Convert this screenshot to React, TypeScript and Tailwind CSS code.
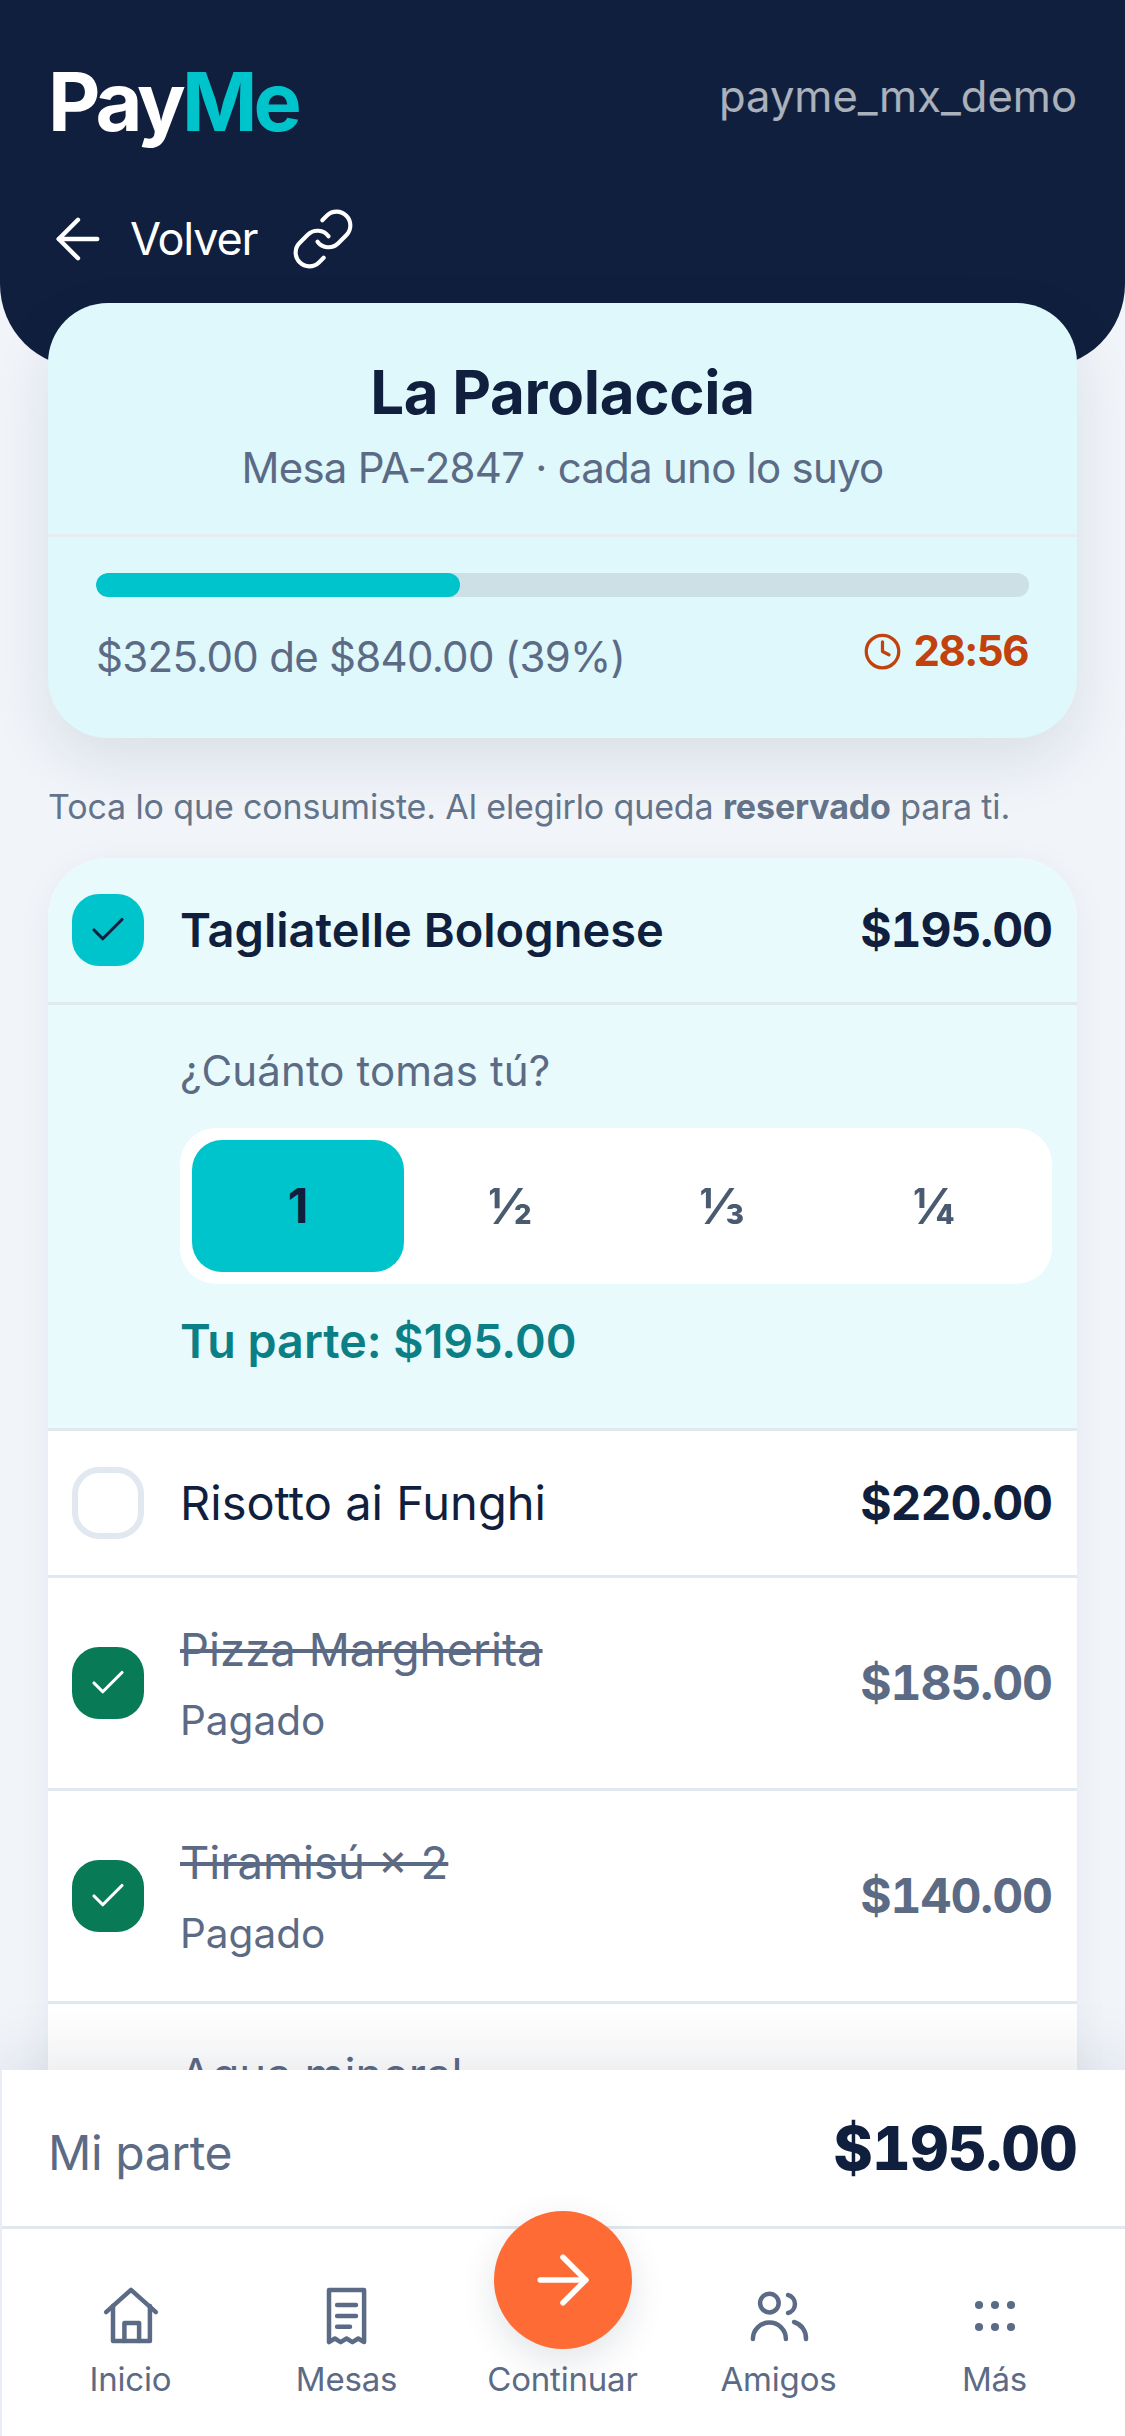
import React from "react";
import { ArrowLeft, ArrowRight, Link, Clock, Check } from "lucide-react";

function CheckBox({ state }: { state: "on" | "off" | "paid" }) {
  if (state === "off") return <div className="w-[72px] h-[72px] shrink-0 rounded-[27px] border-[6px] border-[#e2e8f0] bg-white" />;
  return (
    <div className={`w-[72px] h-[72px] shrink-0 rounded-[27px] flex items-center justify-center ${state === "on" ? "bg-[#00c4cc] text-[#0f1f3d]" : "bg-[#087a56] text-white"}`}>
      <Check size={42} strokeWidth={1.8} />
    </div>
  );
}

function PaidRow({ name, price }: { name: string; price: string }) {
  return (
    <div className="h-[213px] shrink-0 bg-white border-b-[3px] border-[#e2e8f0] pl-[24px] pr-[25px] flex items-center gap-[36px]">
      <CheckBox state="paid" />
      <div className="flex-1 flex flex-col gap-[13px]">
        <div className="text-[45.5px] leading-[63px] text-[#5c6b85] line-through">{name}</div>
        <div className="text-[40.5px] leading-[54px] text-[#5c6b85]">Pagado</div>
      </div>
      <div className="text-[48px] font-bold tabular-nums tracking-[-1.1px] text-[#5c6b85]">{price}</div>
    </div>
  );
}

function NavItem({ label, children }: { label: string; children: React.ReactNode }) {
  return (
    <div className="w-[216px] flex flex-col items-center pt-[51px]">
      <svg width="72" height="72" viewBox="0 0 24 24" fill="none" stroke="#5c6b85" strokeWidth="1.5" strokeLinecap="round" strokeLinejoin="round">
        {children}
      </svg>
      <div className="mt-[3px] text-[33px] leading-[48px] tracking-[-0.2px] text-[#5c6b85]">{label}</div>
    </div>
  );
}

export default function App() {
  return (
    <div className="relative w-[1125px] h-[2436px] overflow-hidden bg-[#f1f5fa] font-['Inter','Noto_Sans',sans-serif] text-[#0f1f3d]">
      <header className="h-[368px] bg-[#0f1f3d] rounded-b-[84px] px-[48px] pt-[57px]">
        <div className="flex items-start justify-between">
          <div className="text-[81px] leading-[90px] font-bold tracking-[-4px] text-white">Pay<span className="text-[#00c4cc]">Me</span></div>
          <div className="text-[43.5px] leading-[60px] mt-[9px] text-white/65">payme_mx_demo</div>
        </div>
        <div className="mt-[59px] flex items-center text-white">
          <ArrowLeft size={66} strokeWidth={1.6} className="-ml-[3px]" />
          <span className="ml-[19px] text-[45px] leading-[60px] tracking-[-1.2px]">Volver</span>
          <Link size={66} strokeWidth={1.5} className="ml-[33px]" />
        </div>
      </header>

      <section className="relative mx-[48px] -mt-[65px] h-[435px] rounded-[60px] bg-[#dff8fb] shadow-[0_24px_60px_rgba(15,31,61,0.1)] flex flex-col">
        <div className="h-[234px] shrink-0 border-b-[3px] border-[#e6ecf2] text-center pt-[56px]">
          <div className="text-[60px] leading-[66px] font-bold tracking-[-0.3px]">La Parolaccia</div>
          <div className="mt-[13px] text-[42px] leading-[60px] tracking-[-0.75px] text-[#5c6b85]">Mesa PA-2847 · cada uno lo suyo</div>
        </div>
        <div className="px-[48px] pt-[36px]">
          <div className="h-[24px] rounded-full bg-[#cce0e5] overflow-hidden">
            <div className="h-full w-[39%] rounded-full bg-[#00c4cc]" />
          </div>
          <div className="mt-[27px] flex items-start justify-between">
            <div className="text-[42px] leading-[60px] tracking-[-0.7px] text-[#5c6b85] mt-[3px]">$325.00 de $840.00 (39%)</div>
            <div className="flex items-center gap-[12px] text-[42px] leading-[54px] tracking-[-1.5px] font-bold text-[#c2410c] pr-[1px]">
              <Clock size={39} strokeWidth={2} />
              <span>28:56</span>
            </div>
          </div>
        </div>
      </section>

      <p className="mx-[48px] mt-[43px] text-[34px] leading-[51px] tracking-[-0.13px] text-[#64748b]">
        Toca lo que consumiste. Al elegirlo queda <b className="font-bold">reservado</b> para ti.
      </p>

      <section className="mx-[48px] mt-[26px] rounded-[60px] overflow-hidden bg-white shadow-[0_6px_36px_rgba(15,31,61,0.05)] flex flex-col">
        <div className="h-[147px] shrink-0 bg-[#e8fafb] border-b-[3px] border-[#e2e8f0] pl-[24px] pr-[25px] flex items-center gap-[36px]">
          <CheckBox state="on" />
          <div className="flex-1 text-[47px] font-semibold">Tagliatelle Bolognese</div>
          <div className="text-[48px] font-bold tabular-nums tracking-[-1.1px]">$195.00</div>
        </div>
        <div className="h-[426px] shrink-0 bg-[#e8fafb] border-b-[3px] border-[#e2e8f0] pl-[132px] pr-[25px] pt-[36px]">
          <div className="text-[42px] leading-[60px] tracking-[0.1px] text-[#5c6b85]">¿Cuánto tomas tú?</div>
          <div className="mt-[27px] h-[156px] rounded-[36px] bg-white p-[12px] grid grid-cols-4">
            <div className="rounded-[30px] bg-[#00c4cc] flex items-center justify-center text-[48px] font-bold">1</div>
            <div className="flex items-center justify-center text-[50px] font-bold text-[#4a5a70]">½</div>
            <div className="flex items-center justify-center text-[50px] font-bold text-[#4a5a70]">⅓</div>
            <div className="flex items-center justify-center text-[50px] font-bold text-[#4a5a70]">¼</div>
          </div>
          <div className="mt-[27px] text-[46.6px] leading-[60px] font-semibold text-[#0a7f85]">Tu parte: $195.00</div>
        </div>
        <div className="h-[147px] shrink-0 bg-white border-b-[3px] border-[#e2e8f0] pl-[24px] pr-[25px] flex items-center gap-[36px]">
          <CheckBox state="off" />
          <div className="flex-1 text-[47px]">Risotto ai Funghi</div>
          <div className="text-[48px] font-bold tabular-nums tracking-[-1.1px]">$220.00</div>
        </div>
        <PaidRow name="Pizza Margherita" price="$185.00" />
        <PaidRow name="Tiramisú × 2" price="$140.00" />
        <div className="h-[213px] shrink-0 bg-white pl-[132px] pt-[39px]">
          <div className="text-[45.5px] leading-[63px] text-[#5c6b85]">Agua mineral</div>
        </div>
      </section>

      <footer className="absolute left-0 right-0 bottom-0 h-[366px] bg-white border-l-[2px] border-l-[#e8eef4] shadow-[0_-12px_60px_rgba(15,31,61,0.1)]">
        <div className="h-[159px] border-b-[3px] border-[#e2e8f0] pl-[46px] pr-[48px] flex items-center justify-between">
          <div className="text-[48px] tracking-[-0.4px] text-[#5c6b85] mt-[9px]">Mi parte</div>
          <div className="text-[60px] font-extrabold tabular-nums tracking-[-0.8px]">$195.00</div>
        </div>
        <nav className="flex justify-center -ml-[2px]">
          <NavItem label="Inicio">
            <path d="M3.7 10.7 12 3.3l8.3 7.4" />
            <path d="M6 8.7v11.6h12.3V8.7" />
            <path d="M9.8 20.3v-6h4.9v6" />
          </NavItem>
          <NavItem label="Mesas">
            <path d="M6 3.3h11.7v17.4l-1.95-1.2-1.95 1.2-1.95-1.2-1.95 1.2-1.95-1.2L6 20.7Z" />
            <path d="M8.7 8.3H15M8.7 12H15M8.7 15.6H13" />
          </NavItem>
          <div className="w-[216px] flex flex-col items-center pt-[51px]">
            <div className="-mt-[69px] mb-[3px] w-[138px] h-[138px] rounded-full bg-[#ff6b35] text-white flex items-center justify-center shadow-[0_12px_36px_rgba(15,31,61,0.12)]">
              <ArrowRight size={78} strokeWidth={1.7} />
            </div>
            <div className="mt-[3px] text-[33px] leading-[48px] tracking-[-0.2px] text-[#5c6b85]">Continuar</div>
          </div>
          <NavItem label="Amigos">
            <circle cx="8.8" cy="7.7" r="3.1" />
            <path d="M15 5a3.1 3.1 0 0 1 0 6" />
            <path d="M3.3 19.7a5.5 5.5 0 0 1 11 0" />
            <path d="M17 14a5.6 5.6 0 0 1 4 5.7" />
          </NavItem>
          <NavItem label="Más">
            <g fill="#5c6b85" stroke="none">
              <circle cx="6.67" cy="8.33" r="1.35" />
              <circle cx="12" cy="8.33" r="1.35" />
              <circle cx="17.33" cy="8.33" r="1.35" />
              <circle cx="6.67" cy="15.67" r="1.35" />
              <circle cx="12" cy="15.67" r="1.35" />
              <circle cx="17.33" cy="15.67" r="1.35" />
            </g>
          </NavItem>
        </nav>
      </footer>
    </div>
  );
}
